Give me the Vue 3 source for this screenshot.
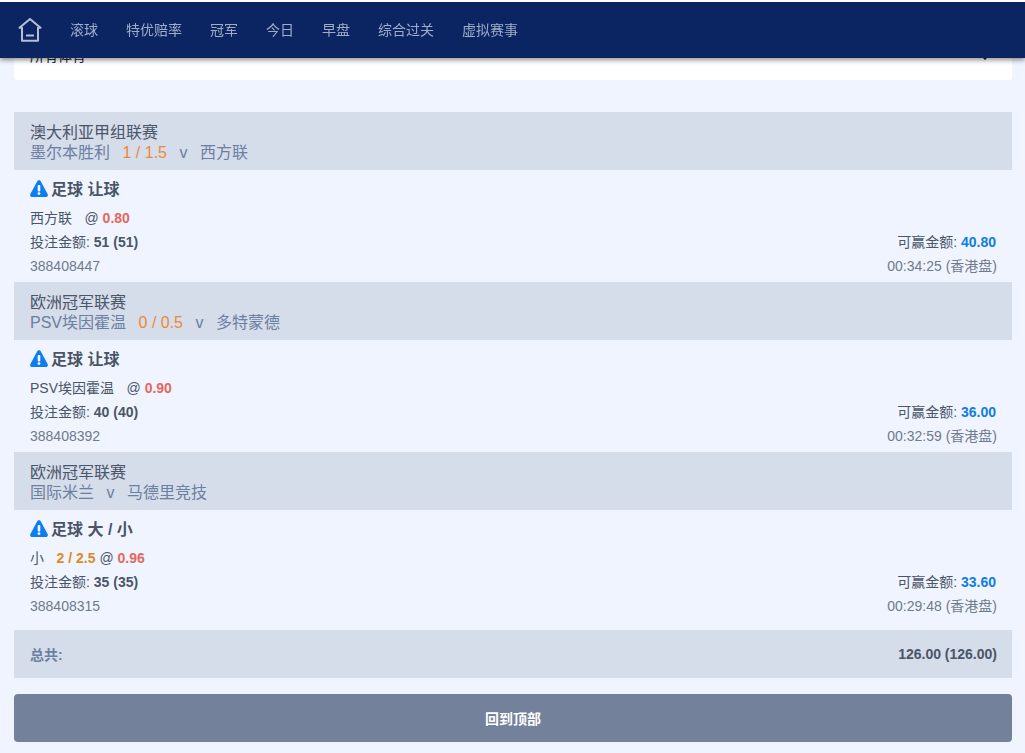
<script setup>
const navItems = ['滚球', '特优赔率', '冠军', '今日', '早盘', '综合过关', '虚拟赛事']
const bets = [
  {
    league: '澳大利亚甲组联赛', home: '墨尔本胜利', line: '1 / 1.5', away: '西方联',
    market: '足球 让球', pick: '西方联', pickLine: '', odds: '0.80', stake: '51 (51)', win: '40.80',
    id: '388408447', time: '00:34:25 (香港盘)'
  },
  {
    league: '欧洲冠军联赛', home: 'PSV埃因霍温', line: '0 / 0.5', away: '多特蒙德',
    market: '足球 让球', pick: 'PSV埃因霍温', pickLine: '', odds: '0.90', stake: '40 (40)', win: '36.00',
    id: '388408392', time: '00:32:59 (香港盘)'
  },
  {
    league: '欧洲冠军联赛', home: '国际米兰', line: '', away: '马德里竞技',
    market: '足球 大 / 小', pick: '小', pickLine: '2 / 2.5', odds: '0.96', stake: '35 (35)', win: '33.60',
    id: '388408315', time: '00:29:48 (香港盘)'
  }
]
</script>

<template>
  <div class="page">
    <header class="topbar">
      <svg class="home" viewBox="0 0 24 24" width="24" height="24" fill="none" stroke="#b4c0d8" stroke-width="2" stroke-linejoin="round">
        <path d="M12 1 L22.5 9.8 H20 V22.8 H4 V9.8 H1.5 Z" />
        <path d="M8 17.5 H16" stroke-width="2" />
      </svg>
      <nav class="nav">
        <span v-for="item in navItems" :key="item">{{ item }}</span>
      </nav>
    </header>

    <main class="content">
      <div class="filter">
        <span>所有体育</span>
        <svg class="chev" viewBox="0 0 10 6" width="10" height="6" fill="none" stroke="#1a202c" stroke-width="1.5">
          <path d="M1 1 L5 5 L9 1" />
        </svg>
      </div>

      <section v-for="(bet, i) in bets" :key="bet.id">
        <div class="league">
          <div class="league-name">{{ bet.league }}</div>
          <div class="teams">
            <span>{{ bet.home }}</span>
            <span v-if="bet.line" class="line">{{ bet.line }}</span>
            <span>v</span>
            <span>{{ bet.away }}</span>
          </div>
        </div>
        <div class="bet" :class="{ last: i === bets.length - 1 }">
          <h3 class="market">
            <svg class="warn" viewBox="0 0 18 17" width="18" height="17">
              <path d="M9 0.3 C9.8 0.3 10.5 0.8 10.9 1.5 L17.6 13.9 C18.4 15.3 17.4 17 15.8 17 H2.2 C0.6 17 -0.4 15.3 0.4 13.9 L7.1 1.5 C7.5 0.8 8.2 0.3 9 0.3 Z" fill="#0d7df2" />
              <rect x="7.7" y="5" width="2.6" height="6.4" rx="1" fill="#fff" />
              <circle cx="9" cy="13.6" r="1.4" fill="#fff" />
            </svg>
            {{ bet.market }}
          </h3>
          <div class="row pick">
            <span class="pick-name">{{ bet.pick }}</span>
            <b v-if="bet.pickLine" class="pick-line">{{ bet.pickLine }}</b>
            <span>@ </span>
            <b class="odds">{{ bet.odds }}</b>
          </div>
          <div class="row split">
            <span>投注金额: <b class="stake">{{ bet.stake }}</b></span>
            <span class="win-wrap">可赢金额: <b class="win">{{ bet.win }}</b></span>
          </div>
          <div class="row split muted">
            <span>{{ bet.id }}</span>
            <span>{{ bet.time }}</span>
          </div>
        </div>
      </section>

      <div class="total">
        <b class="total-label">总共:</b>
        <b class="total-value">126.00 (126.00)</b>
      </div>

      <button class="back" type="button">回到顶部</button>
    </main>
  </div>
</template>

<style>
html, body {
  margin: 0;
  background: #f0f4fe;
}
</style>

<style scoped>
.page {
  height: 753px;
  overflow: hidden;
  background: #f0f4fe;
  font-family: "Liberation Sans", "Noto Sans CJK SC", sans-serif;
  font-size: 14px;
  color: #4a5568;
}
.topbar {
  position: fixed;
  top: 2px;
  left: 0;
  right: 0;
  height: 56px;
  z-index: 2;
  display: flex;
  align-items: center;
  padding-left: 18px;
  background: #0b2563;
  box-shadow: 0 2px 5px rgba(0, 0, 0, 0.45);
}
.topbar::before {
  content: "";
  position: absolute;
  top: -2px;
  left: 0;
  right: 0;
  height: 2px;
  background: #fff;
}
.home {
  flex: none;
}
.nav {
  display: flex;
  gap: 28px;
  margin-left: 28px;
  padding-bottom: 2px;
  color: #9fadc8;
}
.content {
  padding: 34px 13px 0 14px;
}
.filter {
  height: 46px;
  box-sizing: border-box;
  padding: 11px 16px 0;
  display: flex;
  justify-content: space-between;
  align-items: flex-start;
  background: #fff;
  border-radius: 0 0 3px 3px;
  color: #1a202c;
  line-height: 22px;
  margin-bottom: 32px;
}
.chev {
  margin: 9px 6px 0 0;
}
.league {
  height: 58px;
  box-sizing: border-box;
  padding: 11px 16px 7px;
  background: #d5dcea;
  font-size: 16px;
  line-height: 20px;
}
.league-name {
  color: #4a5568;
}
.teams {
  display: flex;
  gap: 12.5px;
  color: #6b7fa0;
}
.line {
  color: #ed8936;
}
.bet {
  height: 112px;
  box-sizing: border-box;
  padding: 7px 15px 0 16px;
}
.bet.last {
  height: 120px;
}
.market {
  display: flex;
  align-items: center;
  gap: 3px;
  margin: 0 0 7px;
  height: 22px;
  font-size: 16px;
  font-weight: 700;
  color: #4a5568;
}
.warn {
  flex: none;
}
.row {
  height: 24px;
  line-height: 24px;
}
.pick {
  white-space: pre;
}
.pick-name {
  margin-right: 12.5px;
}
.pick-line {
  margin-right: 4px;
  color: #dd8a1f;
}
.odds {
  color: #e2685f;
}
.split {
  display: flex;
  justify-content: space-between;
}
.muted {
  color: #6f7a8c;
}
.stake {
  color: #4a5568;
}
.win-wrap {
  margin-right: 1px;
}
.win {
  color: #0f7ee0;
}
.total {
  height: 48px;
  box-sizing: border-box;
  padding: 0 15px 0 16px;
  display: flex;
  justify-content: space-between;
  align-items: center;
  background: #d5dcea;
}
.total-label {
  color: #6b7fa0;
}
.back {
  display: block;
  width: 100%;
  height: 48px;
  margin-top: 16px;
  border: 0;
  border-radius: 4px;
  background: #74819b;
  color: #fff;
  font: 700 14px "Liberation Sans", "Noto Sans CJK SC", sans-serif;
}
</style>
